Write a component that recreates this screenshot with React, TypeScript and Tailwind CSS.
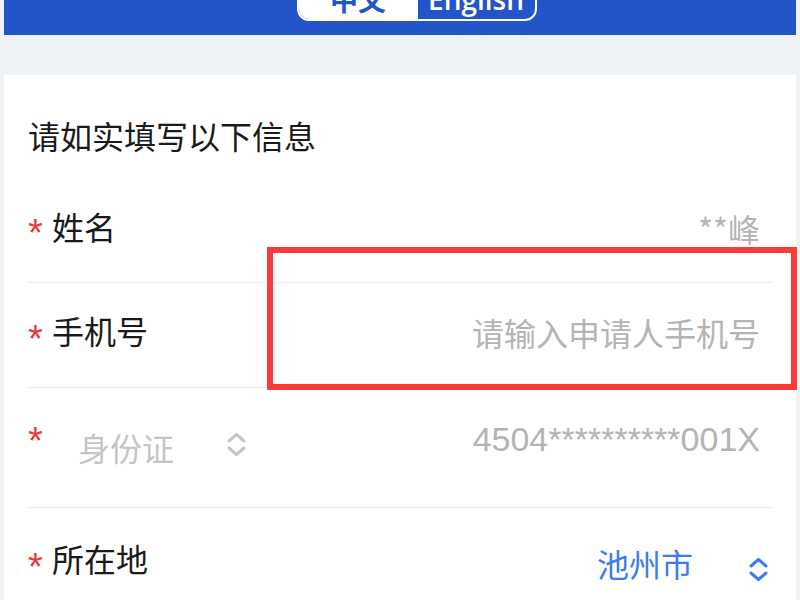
import React from "react";

const cjk = { fontFamily: '"Noto Sans CJK SC", "Noto Sans", sans-serif' };

const UpDown = ({ color }: { color: string }) => (
  <svg width="21" height="25" viewBox="0 0 21 25" fill="none" stroke={color} strokeWidth="3" strokeLinecap="round" strokeLinejoin="round">
    <polyline points="3,9 10.5,2.5 18,9" />
    <polyline points="3,16 10.5,22.5 18,16" />
  </svg>
);

const Star = ({ className = "" }: { className?: string }) => (
  <span
    className={"text-[38px] leading-none text-[#e5393b] w-[24px] " + className}
    style={{ fontFamily: '"Liberation Sans", sans-serif' }}
  >
    *
  </span>
);

const App = () => {
  return (
    <div className="w-[800px] h-[600px] overflow-hidden bg-[#eff3f6] px-1 relative" style={cjk}>
      {/* header */}
      <div className="h-[35px] bg-[#2355c8] flex justify-center">
        <div className="flex h-[40px] -mt-[19px] ml-[33px] rounded-b-[12px] border-2 border-white overflow-hidden">
          <div className="w-[119px] bg-white text-[#2355c8] text-[28px] font-semibold flex items-center justify-center pb-[5px]">
            中文
          </div>
          <div
            className="w-[117px] text-white text-[28px] font-semibold flex items-center justify-center pb-[5px]"
            style={{ fontFamily: '"Open Sans", sans-serif' }}
          >
            English
          </div>
        </div>
      </div>
      <div className="h-[40px]" />

      {/* card */}
      <div className="bg-white px-6 text-[32px]">
        <div className="h-[100px] flex items-center text-[#1a1a1a] pt-[20px]">请如实填写以下信息</div>

        <div className="h-[108px] flex items-center border-b border-[#ededed]">
          <Star className="mt-[8px]" />
          <span className="text-[#1a1a1a] mb-[6px]">姓名</span>
          <span className="ml-auto mr-[12px] text-[#b4b4b4] -mt-[2px]">**峰</span>
        </div>

        <div className="h-[105px] flex items-center border-b border-[#ededed]">
          <Star className="mt-[8px]" />
          <span className="text-[#1a1a1a] mb-[10px]">手机号</span>
          <span className="ml-auto mr-[12px] text-[#b4b4b4] mb-[6px]">请输入申请人手机号</span>
        </div>

        <div className="h-[120px] flex items-center border-b border-[#ededed]">
          <Star className="-mt-[14px]" />
          <span className="ml-[26px] text-[#c4c4c4] -mt-[2px]">身份证</span>
          <span className="ml-[52px] -mt-[6px]">
            <UpDown color="#c6c6c6" />
          </span>
          <span
            className="ml-auto mr-[12px] text-[#b4b4b4] text-[34px] -mt-[16px]"
            style={{ fontFamily: '"Liberation Sans", sans-serif' }}
          >
            4504**********001X
          </span>
        </div>

        <div className="h-[110px] flex items-center">
          <Star className="mt-[8px]" />
          <span className="text-[#1a1a1a] mb-[10px]">所在地</span>
          <span className="ml-auto text-[#3b7ded]">池州市</span>
          <span className="ml-[55px] mr-[3px] mt-[12px]">
            <UpDown color="#3b7ded" />
          </span>
        </div>
      </div>

      {/* annotation box */}
      <div className="absolute left-[267px] top-[247px] w-[530px] h-[143px] border-[6px] border-[#ff3838]" />
    </div>
  );
};

export default App;
